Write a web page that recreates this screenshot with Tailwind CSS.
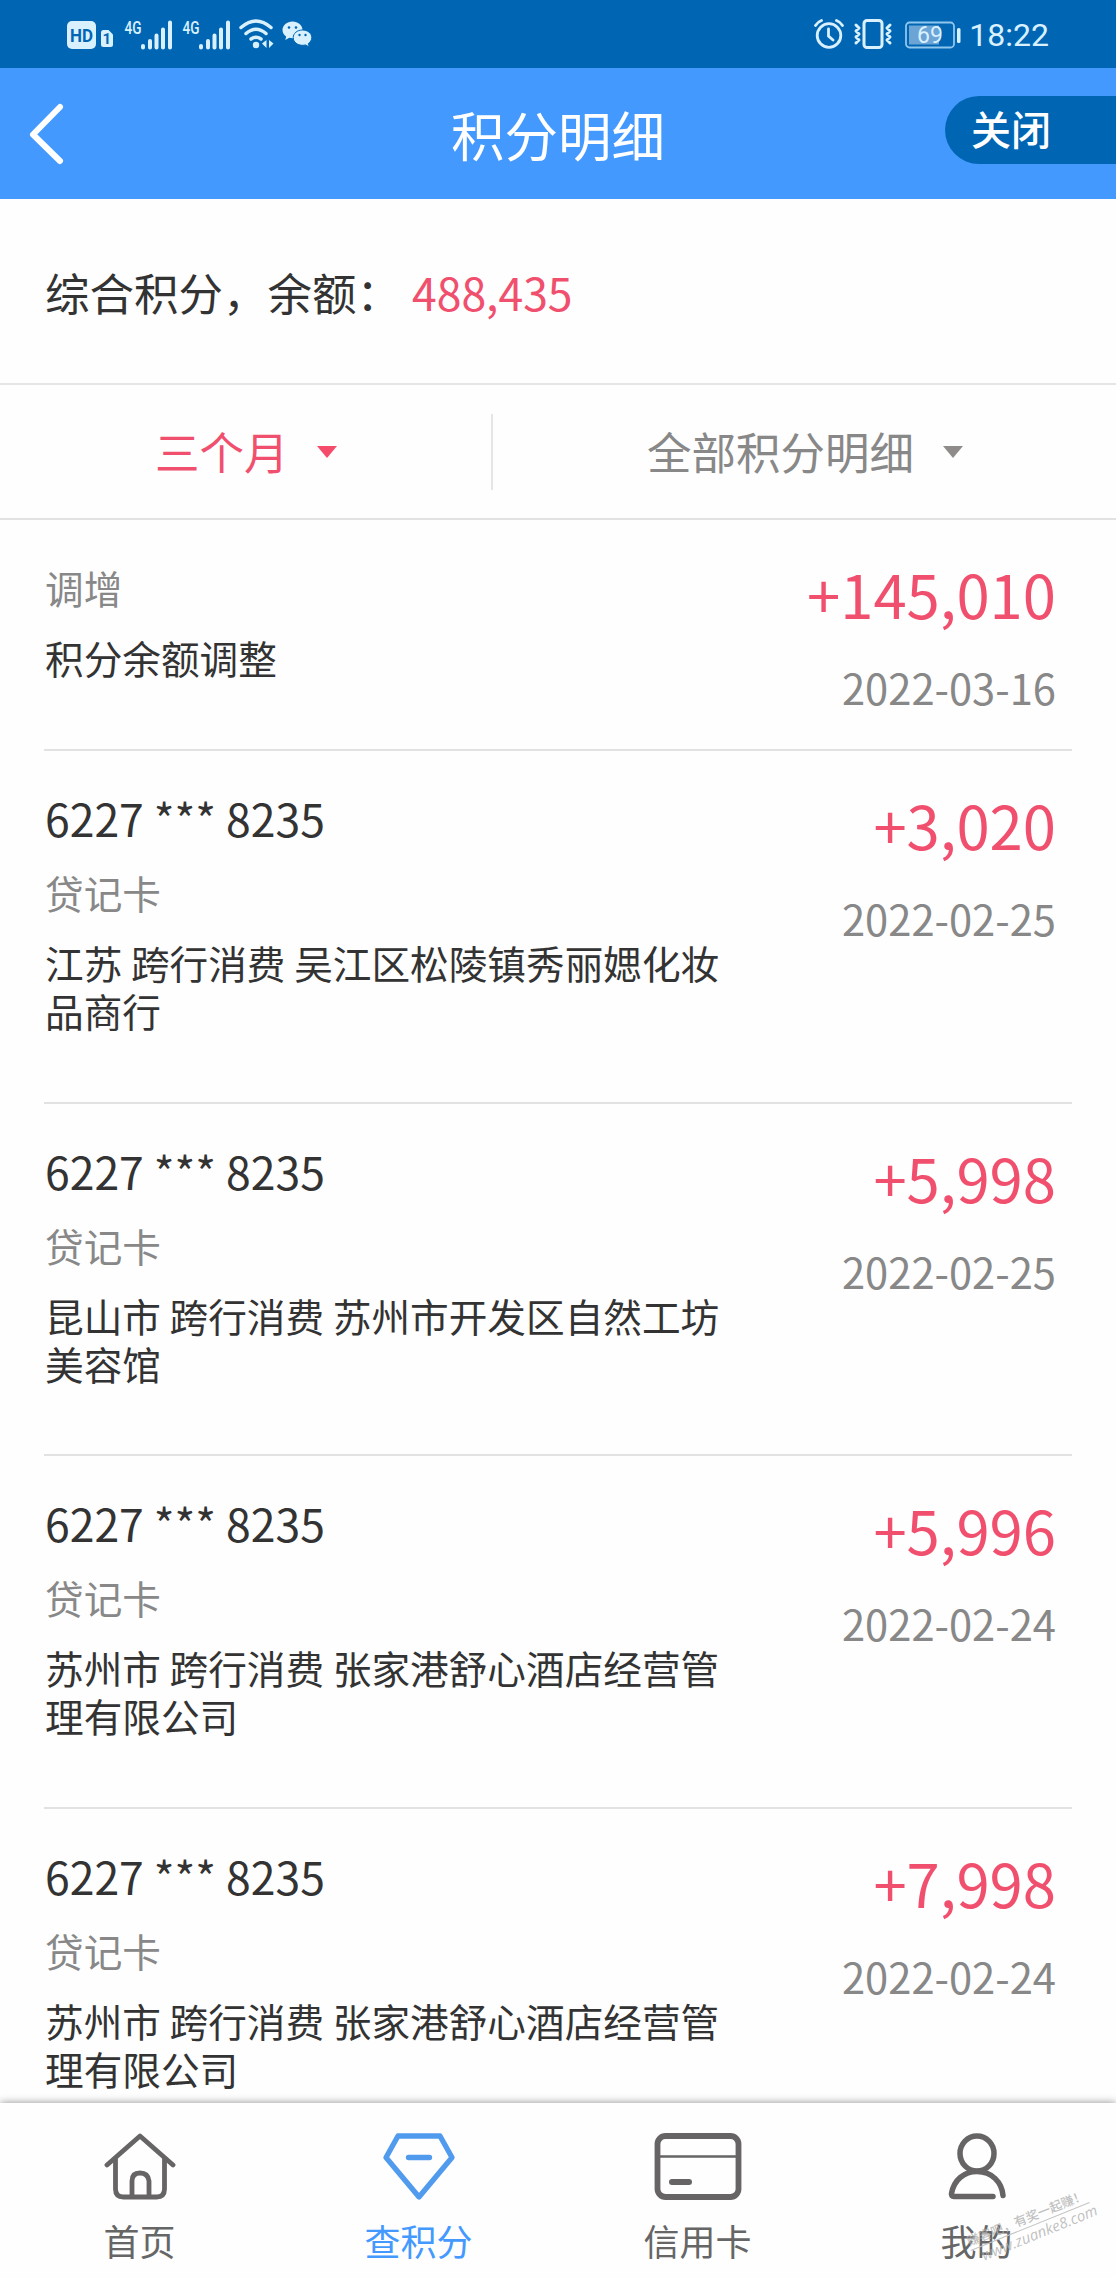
<!DOCTYPE html>
<html lang="zh-CN">

<head>
    <meta charset="UTF-8">
    <meta name="viewport" content="width=device-width, initial-scale=1.0">
    <script src="https://cdn.jsdelivr.net/npm/@tailwindcss/browser@4"></script>
    <title>积分明细</title>
</head>

<body class="bg-white">
    <div class="relative flex flex-col w-[1116px] h-[2278px] overflow-hidden bg-[#fefefe] text-[#333333] font-['Noto_Sans_CJK_SC',sans-serif]">

        <!-- Status bar -->
        <div class="h-[68px] shrink-0 bg-[#0066b3] flex items-center justify-between pl-[67px] pr-[67px] text-[#d9f1ff]">
            <div class="flex items-center">
                <!-- HD + sim -->
                <svg class="w-[46px] h-[30px] mt-[2px]" viewBox="0 0 46 30">
                    <rect x="0" y="1" width="29" height="28" rx="5" fill="#d9f1ff"/>
                    <text x="3" y="22" font-family="Roboto" font-size="19" font-weight="700" fill="#0066b3" textLength="23" lengthAdjust="spacingAndGlyphs">HD</text>
                    <path d="M34 12.500q0-2.500 2.500-2.500h5l4.500 4.500v10q0 2.500-2.500 2.500h-7q-2.500 0-2.500-2.500z" fill="#d9f1ff"/>
                    <text x="39.800" y="24" text-anchor="middle" font-family="Roboto" font-size="15" font-weight="700" fill="#0066b3">1</text>
                </svg>
                <!-- Signal 1 -->
                <svg class="w-[48px] h-[32px] ml-[11px]" viewBox="0 0 48 32">
                    <text x="0.500" y="15.500" font-family="Roboto" font-size="18" font-weight="500" fill="#d9f1ff" textLength="17" lengthAdjust="spacingAndGlyphs">4G</text>
                    <path d="M19 29.500v-1.500M26 29.500v-6.500M32.500 29.500v-12M39 29.500v-18M46 29.500v-25" stroke="#d9f1ff" stroke-width="4" stroke-linecap="round"/>
                </svg>
                <!-- Signal 2 -->
                <svg class="w-[48px] h-[32px] ml-[10px]" viewBox="0 0 48 32">
                    <text x="0.500" y="15.500" font-family="Roboto" font-size="18" font-weight="500" fill="#d9f1ff" textLength="17" lengthAdjust="spacingAndGlyphs">4G</text>
                    <path d="M19 29.500v-1.500M26 29.500v-6.500M32.500 29.500v-12M39 29.500v-18M46 29.500v-25" stroke="#d9f1ff" stroke-width="4" stroke-linecap="round"/>
                </svg>
                <!-- Wifi -->
                <svg class="w-[36px] h-[30px] ml-[9px]" viewBox="0 0 36 30" fill="none" stroke="#d9f1ff" stroke-width="3.500" stroke-linecap="round">
                    <path d="M2 8.500Q17 -4.500 32 8.500M7 14.500Q17 6 27 14.500M12 20Q17 16.500 22 20"/>
                    <circle cx="17" cy="26" r="3.200" fill="#d9f1ff" stroke="none"/>
                    <path d="M27.500 21v8l-4.500-4.500zM30 21v8l4.500-4.500z" fill="#d9f1ff" stroke="none"/>
                </svg>
                <!-- WeChat -->
                <svg class="w-[31px] h-[26px] ml-[7px]" viewBox="0 0 31 26">
                    <path d="M10.500 0.500C5 .5.500 4.200.500 9c0 2.700 1.500 5 3.700 6.500L3.300 19l4-2.200c1 .3 2 .4 3.200.4 5.500 0 10-3.600 10-8.300S16 .5 10.500.500z" fill="#d9f1ff"/>
                    <path d="M20.500 9c-5.200 0-9.300 3.300-9.300 7.600s4.100 7.700 9.300 7.700c1 0 2-.1 3-.4l3.800 2-1-3.300c2-1.400 3.500-3.600 3.500-6 0-4.300-4.200-7.600-9.300-7.600z" fill="#d9f1ff" stroke="#0066b3" stroke-width="1"/>
                    <g fill="#0066b3">
                        <circle cx="7" cy="6.500" r="1.300"/><circle cx="14" cy="6.500" r="1.300"/>
                        <circle cx="17.500" cy="14" r="1.200"/><circle cx="23.500" cy="14" r="1.200"/>
                    </g>
                </svg>
            </div>
            <div class="flex items-center">
                <!-- Alarm -->
                <svg class="w-[30px] h-[30px]" viewBox="0 0 30 30" fill="none" stroke="#d9f1ff" stroke-width="2.800" stroke-linecap="round">
                    <circle cx="15" cy="16.500" r="11.800"/>
                    <path d="M14.500 10v7l4.500 4M1.500 6.500Q3.500 3 7.500 1.500M28.500 6.500Q26.500 3 22.500 1.500"/>
                </svg>
                <!-- Vibrate -->
                <svg class="w-[40px] h-[30px] ml-[9px]" viewBox="0 0 40 30" fill="none" stroke="#d9f1ff" stroke-width="3" stroke-linecap="round" stroke-linejoin="round">
                    <rect x="11" y="1.500" width="18" height="27" rx="3"/>
                    <path d="M3 6l3 3-3 3 3 3-3 3 3 3-3 3M37 6l-3 3 3 3-3 3 3 3-3 3 3 3"/>
                </svg>
                <!-- Battery -->
                <svg class="w-[56px] h-[28px] ml-[12px] mt-[2px]" viewBox="0 0 56 28">
                    <rect x="1" y="1.500" width="48" height="25" rx="3.500" fill="none" stroke="#8fc6ee" stroke-width="1.800"/>
                    <rect x="4" y="4.500" width="30" height="19" fill="#6ca4d6"/>
                    <rect x="52" y="7" width="3.500" height="15" rx="1.500" fill="#d9f1ff"/>
                    <text x="25" y="22" text-anchor="middle" font-family="Roboto" font-size="23" fill="#d9f1ff">69</text>
                </svg>
                <span class="ml-[8px] font-[Roboto] text-[32px] leading-[40px] mt-[2px]">18:22</span>
            </div>
        </div>

        <!-- Header -->
        <div class="relative h-[131px] shrink-0 bg-[#4499ff] flex items-center justify-center text-white">
            <svg class="absolute left-[28px] top-[34px] w-[38px] h-[64px]" viewBox="0 0 38 64" fill="none" stroke="#ffffff" stroke-width="6" stroke-linecap="round" stroke-linejoin="round">
                <path d="M32 5L5 32.500L32 59"/>
            </svg>
            <h1 class="text-[53.500px] leading-[60px]">积分明细</h1>
            <div class="absolute right-0 top-[28px] w-[171px] h-[68px] rounded-l-full bg-[#0066b3] pl-[26px] text-[40px] leading-[64px] font-medium">关闭</div>
        </div>

        <!-- Balance -->
        <div class="h-[186px] shrink-0 border-b-2 border-[#e5e5e5] flex items-center pl-[45px] pt-[2px] text-[44.500px]">
            <span>综合积分，余额：</span>
            <span class="ml-[11px] text-[#f0506e]">488,435</span>
        </div>

        <!-- Filters -->
        <div class="h-[135px] shrink-0 border-b-2 border-[#e2e2e2] flex items-center text-[44.500px]">
            <div class="w-[493px] h-[76px] border-r-2 border-[#e5e5e5] flex items-center pl-[155px] text-[#f0506e]">
                三个月
                <svg class="w-[20px] h-[12px] ml-[28px]" viewBox="0 0 20 12"><path d="M0 0h20L10 12z" fill="#f64c6c"/></svg>
            </div>
            <div class="flex items-center pl-[154px] text-[#888888]">
                全部积分明细
                <svg class="w-[20px] h-[12px] ml-[29px]" viewBox="0 0 20 12"><path d="M0 0h20L10 12z" fill="#8f8b8b"/></svg>
            </div>
        </div>

        <!-- Records -->
        <div id="records" class="flex-1 min-h-0 overflow-hidden pl-[44px] pr-[44px]">
            <div class="h-[231px] flex justify-between border-b-2 border-[#e2e2e2]">
                <div class="pt-[43px] pl-[1px] text-[38.650px] leading-[48px]">
                    <p class="text-[#888888]">调增</p>
                    <p class="mt-[22px]">积分余额调整</p>
                </div>
                <div class="pt-[37px] pr-[16px] text-right">
                    <p class="text-[59.800px] leading-[72px] text-[#f0506e]">+145,010</p>
                    <p class="mt-[28px] text-[41.700px] leading-[60px] text-[#888888]">2022-03-16</p>
                </div>
            </div>
        </div>

        <!-- Tab bar -->
        <div class="relative h-[175px] shrink-0 bg-[#fefefe] shadow-[0_0_8px_rgba(0,0,0,0.45)] grid grid-cols-4 text-[36px] leading-[44px] text-[#666666]">
            <div class="flex flex-col items-center pt-[29px]">
                <svg class="w-[72px] h-[68px]" viewBox="0 0 72 68" fill="none" stroke="#666464" stroke-width="4.800" stroke-linecap="round" stroke-linejoin="round">
                    <path d="M3 33L36 4L69 33"/>
                    <path d="M11.500 27v30q0 8 8 8h33q8 0 8-8V27"/>
                    <path d="M28 64V49q0-8 8-8t9 8v15"/>
                </svg>
                <span class="mt-[18px]">首页</span>
            </div>
            <div class="flex flex-col items-center pt-[29px] text-[#4499ff]">
                <svg class="w-[72px] h-[68px]" viewBox="0 0 72 68" fill="none" stroke="#519bee" stroke-width="5.300" stroke-linecap="round" stroke-linejoin="round">
                    <path d="M15 4h42l12 21.500L36 65L3 25.500z"/>
                    <path d="M25.500 25.500h21"/>
                </svg>
                <span class="mt-[18px]">查积分</span>
            </div>
            <div class="flex flex-col items-center pt-[29px]">
                <svg class="w-[88px] h-[68px]" viewBox="0 0 88 68" fill="none" stroke="#666464" stroke-linecap="round">
                    <rect x="3.500" y="4" width="81" height="61" rx="8" stroke-width="5.800"/>
                    <path d="M6 24.500h76" stroke-width="2.600"/>
                    <path d="M18 50h17" stroke-width="6"/>
                </svg>
                <span class="mt-[18px]">信用卡</span>
            </div>
            <div class="flex flex-col items-center pt-[29px]">
                <svg class="w-[58px] h-[68px]" viewBox="0 0 58 68" fill="none" stroke="#666464" stroke-width="5.500" stroke-linecap="round" stroke-linejoin="round">
                    <ellipse cx="29" cy="21.500" rx="17" ry="17.500"/>
                    <path d="M45 64.500H6q-3 0-2.500-3C6 48 16 39.500 29 39.500c15 0 25 11 26 24"/>
                </svg>
                <span class="mt-[18px]">我的</span>
            </div>
        </div>

        <!-- Corner watermark -->
        <div class="absolute left-[966px] top-[2208px] w-[128px] -rotate-[22deg] text-[#b0b0b0]/80 whitespace-nowrap">
            <p class="text-[12.700px] leading-[18px] font-medium border-b border-[#c4c4c4]">赚客吧，有奖一起赚！</p>
            <p class="-mr-1 text-[15px] leading-[17px] italic font-medium font-['Open_Sans',sans-serif] text-right">www.zuanke8.com</p>
        </div>
    </div>

    <script>
        const records = [
            ['江苏 跨行消费 吴江区松陵镇秀丽媤化妆品商行', '+3,020', '2022-02-25'],
            ['昆山市 跨行消费 苏州市开发区自然工坊美容馆', '+5,998', '2022-02-25'],
            ['苏州市 跨行消费 张家港舒心酒店经营管理有限公司', '+5,996', '2022-02-24'],
            ['苏州市 跨行消费 张家港舒心酒店经营管理有限公司', '+7,998', '2022-02-24'],
        ];
        document.getElementById('records').innerHTML += records.map(([desc, amount, date]) => `
            <div class="h-[352.700px] flex justify-between border-b-2 border-[#e2e2e2]">
                <div class="pt-[39px] pl-[1px] w-[690px]">
                    <p class="text-[44.500px] leading-[56px]">6227 *** 8235</p>
                    <p class="mt-[22px] text-[38.650px] leading-[48px] text-[#888888]">贷记卡</p>
                    <p class="mt-[22px] text-[38.650px] leading-[48px]">${desc}</p>
                </div>
                <div class="pt-[37px] pr-[16px] text-right">
                    <p class="text-[59.800px] leading-[72px] text-[#f0506e]">${amount}</p>
                    <p class="mt-[28px] text-[41.700px] leading-[60px] text-[#888888]">${date}</p>
                </div>
            </div>`).join('');
    </script>
</body>

</html>
